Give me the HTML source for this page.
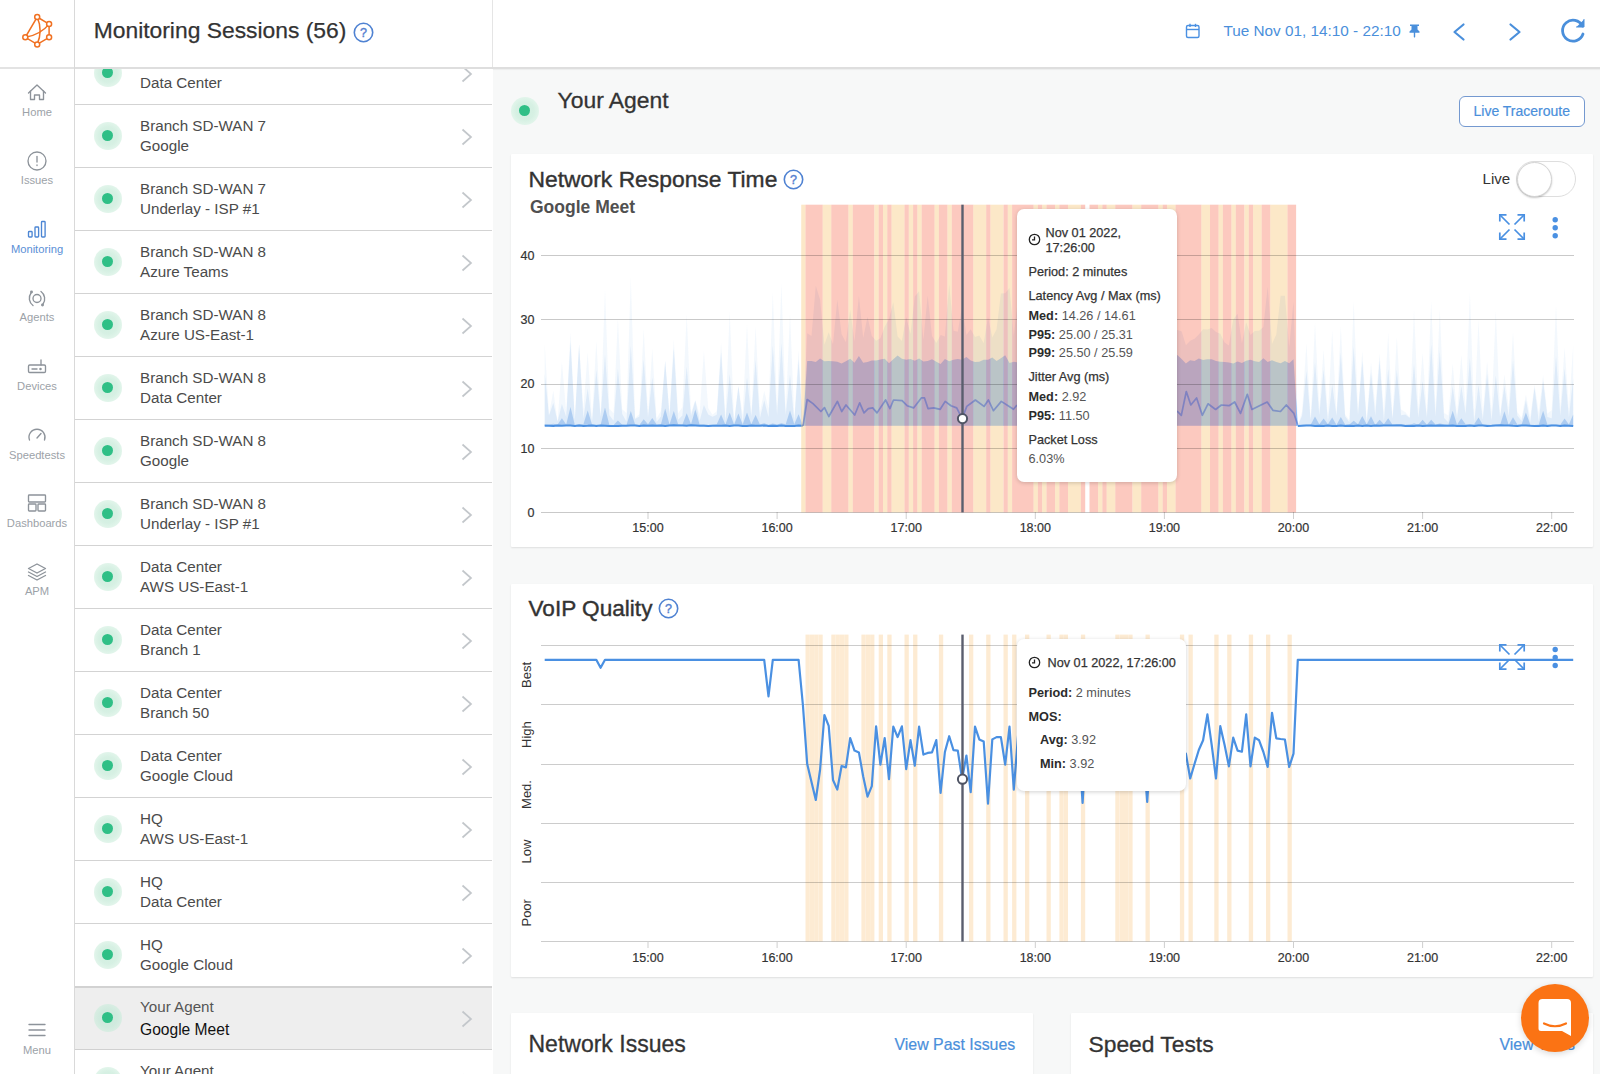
<!DOCTYPE html>
<html><head><meta charset="utf-8"><title>Monitoring</title>
<style>
*{box-sizing:border-box;margin:0;padding:0}
html,body{width:1600px;height:1074px;overflow:hidden;background:#f7f8f8;font-family:"Liberation Sans", sans-serif;color:#3d3d3d}
.abs{position:absolute}
.t{position:absolute;white-space:nowrap;line-height:1}
.nav{position:absolute;left:0;top:0;width:75px;height:1074px;background:#fff;border-right:1px solid #d9d9d9}
.navlbl{position:absolute;left:0;width:74px;text-align:center;font-size:11.2px;color:#9aa0a6;white-space:nowrap;line-height:1}
.panel{position:absolute;left:75px;top:0;width:418px;height:1074px;background:#fff;overflow:hidden}
.row{position:absolute;left:0;width:417px;height:63px;border-bottom:1px solid #dcdcdc;background:#fff}
.row .l1,.row .l2{position:absolute;left:65px;font-size:15.2px;color:#474747;white-space:nowrap;line-height:1}
.row .l1{top:14px}
.row .l2{top:34px}
.dot{position:absolute;width:28px;height:28px;border-radius:50%;background:radial-gradient(circle, #d2efe1 0, #d6f0e3 9px, #e2f5eb 14px)}
.dot:after{content:"";position:absolute;left:8.5px;top:8.5px;width:11px;height:11px;border-radius:50%;background:#2fbf86}
.card{position:absolute;background:#fff;border-radius:1px;box-shadow:0 1px 2px rgba(0,0,0,0.10)}
.tip{position:absolute;background:#fff;border-radius:7px;box-shadow:0 1px 4px rgba(0,0,0,0.18);font-size:12.7px;color:#333}
.t b{font-weight:700;color:#2b2b2b}
</style></head><body>
<div class="nav"><svg class="abs" style="left:0;top:0" width="74" height="68" viewBox="0 0 74 68">
<g fill="none" stroke="#f07122" stroke-width="1.5" stroke-linecap="round">
<path d="M37.2 17 L49.1 24.1 L49.1 37.3 L37.2 44.4 L25.3 37.3 Z"/>
<path d="M37.2 17 Q43 30.7 37.2 44.4"/>
<path d="M25.3 37.3 Q40.6 34.7 49.1 24.1"/>
</g>
<g fill="#fff" stroke="#f07122" stroke-width="1.5">
<circle cx="37.2" cy="17" r="2.5"/><circle cx="49.1" cy="24.1" r="2.5"/><circle cx="49.1" cy="37.3" r="2.5"/>
<circle cx="37.2" cy="44.4" r="2.5"/><circle cx="25.3" cy="37.3" r="2.5"/>
</g></svg><div class="abs" style="left:0;top:67px;width:74px;height:2px;background:#e3e3e3"></div><svg class="abs" style="left:0;top:0" width="74" height="1074" viewBox="0 0 74 1074" fill="none" stroke-linecap="round" stroke-linejoin="round"><g stroke="#8d939a" stroke-width="1.35"><path d="M28.5 93 L37 85 L45.5 93" /><path d="M30.5 91 V99.5 H34.5 V95 H39.5 V99.5 H43.5 V91"/></g><g stroke="#8d939a" stroke-width="1.35"><circle cx="37" cy="161" r="9"/><path d="M37 156.5 V162"/><path d="M37 165 V165.6"/></g><g stroke="#4c86d4" stroke-width="1.35"><rect x="28.5" y="231.5" width="3.6" height="5.5" rx="0.8"/><rect x="35" y="227" width="3.6" height="10" rx="0.8"/><rect x="41.5" y="221.5" width="3.6" height="15.5" rx="0.8"/></g><g stroke="#8d939a" stroke-width="1.35"><circle cx="37" cy="298.5" r="4"/><path d="M31 293 A9 9 0 0 0 33 305.5"/><path d="M43 304 A9 9 0 0 0 41 291.5"/><circle cx="31.5" cy="292" r="0.8"/><circle cx="42.5" cy="305" r="0.8"/></g><g stroke="#8d939a" stroke-width="1.35"><rect x="28.5" y="365" width="17" height="7.5" rx="1.2"/><path d="M41 365 V360"/><path d="M32 369 H37"/><circle cx="40.5" cy="369" r="0.6"/></g><g stroke="#8d939a" stroke-width="1.35"><path d="M29.5 440 A8 8 0 1 1 44.5 440"/><path d="M37 438 L41 433.5"/></g><g stroke="#8d939a" stroke-width="1.35"><rect x="28.5" y="495" width="17" height="7" rx="0.8"/><rect x="28.5" y="504" width="7.5" height="7" rx="0.8"/><rect x="38" y="504" width="7.5" height="7" rx="0.8"/></g><g stroke="#8d939a" stroke-width="1.35"><path d="M37 564 L45.5 568.5 L37 573 L28.5 568.5 Z"/><path d="M28.5 572 L37 576.5 L45.5 572"/><path d="M28.5 575.5 L37 580 L45.5 575.5"/></g><g stroke="#8d939a" stroke-width="1.35"><path d="M29 1024.5 H45"/><path d="M29 1030 H45"/><path d="M29 1035.5 H45"/></g></svg><div class="navlbl" style="top:107px;color:#9ca2a8">Home</div><div class="navlbl" style="top:175px;color:#9ca2a8">Issues</div><div class="navlbl" style="top:244px;color:#5a8fd6">Monitoring</div><div class="navlbl" style="top:312px;color:#9ca2a8">Agents</div><div class="navlbl" style="top:381px;color:#9ca2a8">Devices</div><div class="navlbl" style="top:450px;color:#9ca2a8">Speedtests</div><div class="navlbl" style="top:518px;color:#9ca2a8">Dashboards</div><div class="navlbl" style="top:586px;color:#9ca2a8">APM</div><div class="navlbl" style="top:1045px;color:#9ca2a8">Menu</div></div><div class="panel"><div class="dot" style="left:18.5px;top:58.5px"></div><div class="t" style="left:65px;top:55px;font-size:15.2px;color:#4b4b4b">Data Center</div><div class="t" style="left:65px;top:75px;font-size:15.2px;color:#4b4b4b">Data Center</div><svg class="abs" style="left:386px;top:65px" width="12" height="18" viewBox="0 0 12 18"><path d="M1.5 1.5 L10 9 L1.5 16.5" fill="none" stroke="#c3c7cb" stroke-width="1.7"/></svg><div class="abs" style="left:0;top:103.5px;width:417px;height:1px;background:#d3d3d3"></div><div class="dot" style="left:18.5px;top:121.5px"></div><div class="t" style="left:65px;top:118px;font-size:15.2px;color:#4b4b4b">Branch SD-WAN 7</div><div class="t" style="left:65px;top:138px;font-size:15.2px;color:#4b4b4b">Google</div><svg class="abs" style="left:386px;top:128px" width="12" height="18" viewBox="0 0 12 18"><path d="M1.5 1.5 L10 9 L1.5 16.5" fill="none" stroke="#c3c7cb" stroke-width="1.7"/></svg><div class="abs" style="left:0;top:166.5px;width:417px;height:1px;background:#d3d3d3"></div><div class="dot" style="left:18.5px;top:184.5px"></div><div class="t" style="left:65px;top:181px;font-size:15.2px;color:#4b4b4b">Branch SD-WAN 7</div><div class="t" style="left:65px;top:201px;font-size:15.2px;color:#4b4b4b">Underlay - ISP #1</div><svg class="abs" style="left:386px;top:191px" width="12" height="18" viewBox="0 0 12 18"><path d="M1.5 1.5 L10 9 L1.5 16.5" fill="none" stroke="#c3c7cb" stroke-width="1.7"/></svg><div class="abs" style="left:0;top:229.5px;width:417px;height:1px;background:#d3d3d3"></div><div class="dot" style="left:18.5px;top:247.5px"></div><div class="t" style="left:65px;top:244px;font-size:15.2px;color:#4b4b4b">Branch SD-WAN 8</div><div class="t" style="left:65px;top:264px;font-size:15.2px;color:#4b4b4b">Azure Teams</div><svg class="abs" style="left:386px;top:254px" width="12" height="18" viewBox="0 0 12 18"><path d="M1.5 1.5 L10 9 L1.5 16.5" fill="none" stroke="#c3c7cb" stroke-width="1.7"/></svg><div class="abs" style="left:0;top:292.5px;width:417px;height:1px;background:#d3d3d3"></div><div class="dot" style="left:18.5px;top:310.5px"></div><div class="t" style="left:65px;top:307px;font-size:15.2px;color:#4b4b4b">Branch SD-WAN 8</div><div class="t" style="left:65px;top:327px;font-size:15.2px;color:#4b4b4b">Azure US-East-1</div><svg class="abs" style="left:386px;top:317px" width="12" height="18" viewBox="0 0 12 18"><path d="M1.5 1.5 L10 9 L1.5 16.5" fill="none" stroke="#c3c7cb" stroke-width="1.7"/></svg><div class="abs" style="left:0;top:355.5px;width:417px;height:1px;background:#d3d3d3"></div><div class="dot" style="left:18.5px;top:373.5px"></div><div class="t" style="left:65px;top:370px;font-size:15.2px;color:#4b4b4b">Branch SD-WAN 8</div><div class="t" style="left:65px;top:390px;font-size:15.2px;color:#4b4b4b">Data Center</div><svg class="abs" style="left:386px;top:380px" width="12" height="18" viewBox="0 0 12 18"><path d="M1.5 1.5 L10 9 L1.5 16.5" fill="none" stroke="#c3c7cb" stroke-width="1.7"/></svg><div class="abs" style="left:0;top:418.5px;width:417px;height:1px;background:#d3d3d3"></div><div class="dot" style="left:18.5px;top:436.5px"></div><div class="t" style="left:65px;top:433px;font-size:15.2px;color:#4b4b4b">Branch SD-WAN 8</div><div class="t" style="left:65px;top:453px;font-size:15.2px;color:#4b4b4b">Google</div><svg class="abs" style="left:386px;top:443px" width="12" height="18" viewBox="0 0 12 18"><path d="M1.5 1.5 L10 9 L1.5 16.5" fill="none" stroke="#c3c7cb" stroke-width="1.7"/></svg><div class="abs" style="left:0;top:481.5px;width:417px;height:1px;background:#d3d3d3"></div><div class="dot" style="left:18.5px;top:499.5px"></div><div class="t" style="left:65px;top:496px;font-size:15.2px;color:#4b4b4b">Branch SD-WAN 8</div><div class="t" style="left:65px;top:516px;font-size:15.2px;color:#4b4b4b">Underlay - ISP #1</div><svg class="abs" style="left:386px;top:506px" width="12" height="18" viewBox="0 0 12 18"><path d="M1.5 1.5 L10 9 L1.5 16.5" fill="none" stroke="#c3c7cb" stroke-width="1.7"/></svg><div class="abs" style="left:0;top:544.5px;width:417px;height:1px;background:#d3d3d3"></div><div class="dot" style="left:18.5px;top:562.5px"></div><div class="t" style="left:65px;top:559px;font-size:15.2px;color:#4b4b4b">Data Center</div><div class="t" style="left:65px;top:579px;font-size:15.2px;color:#4b4b4b">AWS US-East-1</div><svg class="abs" style="left:386px;top:569px" width="12" height="18" viewBox="0 0 12 18"><path d="M1.5 1.5 L10 9 L1.5 16.5" fill="none" stroke="#c3c7cb" stroke-width="1.7"/></svg><div class="abs" style="left:0;top:607.5px;width:417px;height:1px;background:#d3d3d3"></div><div class="dot" style="left:18.5px;top:625.5px"></div><div class="t" style="left:65px;top:622px;font-size:15.2px;color:#4b4b4b">Data Center</div><div class="t" style="left:65px;top:642px;font-size:15.2px;color:#4b4b4b">Branch 1</div><svg class="abs" style="left:386px;top:632px" width="12" height="18" viewBox="0 0 12 18"><path d="M1.5 1.5 L10 9 L1.5 16.5" fill="none" stroke="#c3c7cb" stroke-width="1.7"/></svg><div class="abs" style="left:0;top:670.5px;width:417px;height:1px;background:#d3d3d3"></div><div class="dot" style="left:18.5px;top:688.5px"></div><div class="t" style="left:65px;top:685px;font-size:15.2px;color:#4b4b4b">Data Center</div><div class="t" style="left:65px;top:705px;font-size:15.2px;color:#4b4b4b">Branch 50</div><svg class="abs" style="left:386px;top:695px" width="12" height="18" viewBox="0 0 12 18"><path d="M1.5 1.5 L10 9 L1.5 16.5" fill="none" stroke="#c3c7cb" stroke-width="1.7"/></svg><div class="abs" style="left:0;top:733.5px;width:417px;height:1px;background:#d3d3d3"></div><div class="dot" style="left:18.5px;top:751.5px"></div><div class="t" style="left:65px;top:748px;font-size:15.2px;color:#4b4b4b">Data Center</div><div class="t" style="left:65px;top:768px;font-size:15.2px;color:#4b4b4b">Google Cloud</div><svg class="abs" style="left:386px;top:758px" width="12" height="18" viewBox="0 0 12 18"><path d="M1.5 1.5 L10 9 L1.5 16.5" fill="none" stroke="#c3c7cb" stroke-width="1.7"/></svg><div class="abs" style="left:0;top:796.5px;width:417px;height:1px;background:#d3d3d3"></div><div class="dot" style="left:18.5px;top:814.5px"></div><div class="t" style="left:65px;top:811px;font-size:15.2px;color:#4b4b4b">HQ</div><div class="t" style="left:65px;top:831px;font-size:15.2px;color:#4b4b4b">AWS US-East-1</div><svg class="abs" style="left:386px;top:821px" width="12" height="18" viewBox="0 0 12 18"><path d="M1.5 1.5 L10 9 L1.5 16.5" fill="none" stroke="#c3c7cb" stroke-width="1.7"/></svg><div class="abs" style="left:0;top:859.5px;width:417px;height:1px;background:#d3d3d3"></div><div class="dot" style="left:18.5px;top:877.5px"></div><div class="t" style="left:65px;top:874px;font-size:15.2px;color:#4b4b4b">HQ</div><div class="t" style="left:65px;top:894px;font-size:15.2px;color:#4b4b4b">Data Center</div><svg class="abs" style="left:386px;top:884px" width="12" height="18" viewBox="0 0 12 18"><path d="M1.5 1.5 L10 9 L1.5 16.5" fill="none" stroke="#c3c7cb" stroke-width="1.7"/></svg><div class="abs" style="left:0;top:922.5px;width:417px;height:1px;background:#d3d3d3"></div><div class="dot" style="left:18.5px;top:940.5px"></div><div class="t" style="left:65px;top:937px;font-size:15.2px;color:#4b4b4b">HQ</div><div class="t" style="left:65px;top:957px;font-size:15.2px;color:#4b4b4b">Google Cloud</div><svg class="abs" style="left:386px;top:947px" width="12" height="18" viewBox="0 0 12 18"><path d="M1.5 1.5 L10 9 L1.5 16.5" fill="none" stroke="#c3c7cb" stroke-width="1.7"/></svg><div class="abs" style="left:0;top:985.5px;width:417px;height:1px;background:#d3d3d3"></div><div class="abs" style="left:0;top:986px;width:417px;height:64px;background:#eeeeee"></div><div class="abs" style="left:0;top:985.5px;width:417px;height:2px;background:#d2d2d2"></div><div class="dot" style="left:18.5px;top:1003.5px;background:radial-gradient(circle, #cde9dc 0, #d0eade 9px, #d9ede3 14px)"></div><div class="t" style="left:65px;top:998.5px;font-size:15.2px;color:#555">Your Agent</div><div class="t" style="left:65px;top:1021.5px;font-size:15.6px;color:#111">Google Meet</div><svg class="abs" style="left:386px;top:1010px" width="12" height="18" viewBox="0 0 12 18"><path d="M1.5 1.5 L10 9 L1.5 16.5" fill="none" stroke="#c3c7cb" stroke-width="1.7"/></svg><div class="abs" style="left:0;top:1049px;width:417px;height:1px;background:#d0d0d0"></div><div class="dot" style="left:18.5px;top:1066.5px"></div><div class="t" style="left:65px;top:1063px;font-size:15.2px;color:#4b4b4b">Your Agent</div><div class="t" style="left:65px;top:1083px;font-size:15.2px;color:#4b4b4b">Google Cloud</div><svg class="abs" style="left:386px;top:1073px" width="12" height="18" viewBox="0 0 12 18"><path d="M1.5 1.5 L10 9 L1.5 16.5" fill="none" stroke="#c3c7cb" stroke-width="1.7"/></svg><div class="abs" style="left:0;top:1111.5px;width:417px;height:1px;background:#d3d3d3"></div><div class="abs" style="left:0;top:0;width:418px;height:69px;background:#fff;border-bottom:2px solid #dedede"></div><div class="abs" style="left:417px;top:0;width:1px;height:67px;background:#e6e6e6"></div><div class="t" style="left:18.7px;top:19px;font-size:22.85px;color:#333;-webkit-text-stroke:0.25px #333">Monitoring Sessions (56)</div><svg class="abs" style="left:278px;top:22px" width="21" height="21" viewBox="0 0 21 21"><circle cx="10.5" cy="10.5" r="9.2" fill="none" stroke="#4f82d2" stroke-width="1.6"/><text x="10.5" y="15" text-anchor="middle" font-family="Liberation Sans" font-size="12.5" fill="#5580d0" stroke="#5580d0" stroke-width="0.4">?</text></svg></div><div class="abs" style="left:493px;top:0;width:1107px;height:69px;background:#fff;border-bottom:2px solid #dedede;box-shadow:0 1px 1px rgba(0,0,0,0.04)"></div><svg class="abs" style="left:1184px;top:22px" width="18" height="18" viewBox="0 0 18 18" fill="none" stroke="#4a90e2" stroke-width="1.4"><rect x="2.5" y="3.5" width="12.5" height="12" rx="1.5"/><path d="M2.5 7.5 H15"/><path d="M6 1.8 V5"/><path d="M11.5 1.8 V5"/></svg><div class="t" style="left:1223.5px;top:22.5px;font-size:15.3px;color:#4a8fdb">Tue Nov 01, 14:10 - 22:10</div><svg class="abs" style="left:1407px;top:23px" width="15" height="15" viewBox="0 0 15 15" fill="#4a8fdb"><path d="M3 1.5 H12 V3 H10.5 V6.5 L12.5 8.5 V9.8 H8.2 V14 L7.5 14.8 L6.8 14 V9.8 H2.5 V8.5 L4.5 6.5 V3 H3 Z"/></svg><svg class="abs" style="left:1448px;top:20px" width="22" height="24" viewBox="0 0 22 24" fill="none" stroke="#4a8fdb" stroke-width="2.2" stroke-linecap="round" stroke-linejoin="round"><path d="M15.5 4.5 L6.5 12 L15.5 19.5"/></svg><svg class="abs" style="left:1504px;top:20px" width="22" height="24" viewBox="0 0 22 24" fill="none" stroke="#4a8fdb" stroke-width="2.2" stroke-linecap="round" stroke-linejoin="round"><path d="M6.5 4.5 L15.5 12 L6.5 19.5"/></svg><svg class="abs" style="left:1557px;top:13.5px" width="32" height="32" viewBox="0 0 32 32" fill="none" stroke="#4a8fdb" stroke-width="2.8" stroke-linecap="round"><path d="M25.5 12 A10.5 10.5 0 1 0 26 20"/><path d="M27 5.5 V13 H19.5" fill="#4a8fdb" stroke-width="1"/></svg><div class="dot" style="left:510.5px;top:96.5px"></div><div class="t" style="left:557.5px;top:89.2px;font-size:22.9px;color:#333;-webkit-text-stroke:0.3px #333">Your Agent</div><div class="abs" style="left:1459px;top:96px;width:126px;height:31px;border:1.3px solid #7499d0;border-radius:6px;background:#fff"></div><div class="t" style="left:1473.5px;top:104px;font-size:14px;color:#4a8fdb;-webkit-text-stroke:0.2px #4a8fdb">Live Traceroute</div><div class="card" style="left:511px;top:154px;width:1082px;height:393px"></div><div class="card" style="left:511px;top:584px;width:1082px;height:393px"></div><div class="card" style="left:511px;top:1013px;width:522px;height:100px"></div><div class="card" style="left:1071px;top:1013px;width:522px;height:100px"></div><div class="t" style="left:528.5px;top:168px;font-size:22.85px;color:#333;-webkit-text-stroke:0.4px #333">Network Response Time</div><svg class="abs" style="left:783px;top:169px" width="21" height="21" viewBox="0 0 21 21"><circle cx="10.5" cy="10.5" r="9.2" fill="none" stroke="#4f82d2" stroke-width="1.6"/><text x="10.5" y="15" text-anchor="middle" font-family="Liberation Sans" font-size="12.5" fill="#5580d0" stroke="#5580d0" stroke-width="0.4">?</text></svg><div class="t" style="left:530px;top:199px;font-size:17.5px;font-weight:700;color:#505050">Google Meet</div><div class="t" style="left:1482.5px;top:171px;font-size:15.1px;color:#333">Live</div><div class="abs" style="left:1516px;top:161px;width:60px;height:36px;border-radius:18px;border:1px solid #dedede;background:#fff"></div><div class="abs" style="left:1517px;top:162px;width:35px;height:35px;border-radius:50%;background:#fff;border:1px solid #d4d4d4;box-shadow:0 1px 2px rgba(0,0,0,0.22)"></div><div class="t" style="left:528.5px;top:598px;font-size:22.6px;color:#333;-webkit-text-stroke:0.4px #333">VoIP Quality</div><svg class="abs" style="left:658px;top:598px" width="21" height="21" viewBox="0 0 21 21"><circle cx="10.5" cy="10.5" r="9.2" fill="none" stroke="#4f82d2" stroke-width="1.6"/><text x="10.5" y="15" text-anchor="middle" font-family="Liberation Sans" font-size="12.5" fill="#5580d0" stroke="#5580d0" stroke-width="0.4">?</text></svg><div class="t" style="left:528.5px;top:1033px;font-size:23px;color:#333;-webkit-text-stroke:0.3px #333">Network Issues</div><div class="t" style="left:894.5px;top:1037px;font-size:15.9px;color:#4a8fdb;-webkit-text-stroke:0.2px #4a8fdb">View Past Issues</div><div class="t" style="left:1088.5px;top:1033px;font-size:22.8px;color:#333;-webkit-text-stroke:0.3px #333">Speed Tests</div><div class="t" style="left:1499.5px;top:1037px;font-size:15.9px;color:#4a8fdb;-webkit-text-stroke:0.2px #4a8fdb">View Tests</div><div class="abs" style="left:1521px;top:984px;width:68px;height:68px;border-radius:50%;background:#fb7314;box-shadow:0 2px 6px rgba(0,0,0,0.15)"></div><svg class="abs" style="left:1521px;top:984px" width="68" height="68" viewBox="0 0 68 68"><path d="M17.5 19 Q17.5 15 21.5 15 H46 Q50 15 50 19 V52 L41 47 H20 Q17.5 47 17.5 44.5 Z" fill="#fff"/><path d="M23 39.5 Q34 45 45 39.5" fill="none" stroke="#fb7314" stroke-width="2.2" stroke-linecap="round"/></svg><svg class="abs" style="left:0;top:0" width="1600" height="1074" viewBox="0 0 1600 1074"><text x="534.5" y="516.7" text-anchor="end" font-family="Liberation Sans" font-size="12.5" fill="#333" stroke="#333" stroke-width="0.2">0</text><text x="534.5" y="452.5" text-anchor="end" font-family="Liberation Sans" font-size="12.5" fill="#333" stroke="#333" stroke-width="0.2">10</text><text x="534.5" y="388.3" text-anchor="end" font-family="Liberation Sans" font-size="12.5" fill="#333" stroke="#333" stroke-width="0.2">20</text><text x="534.5" y="324.1" text-anchor="end" font-family="Liberation Sans" font-size="12.5" fill="#333" stroke="#333" stroke-width="0.2">30</text><text x="534.5" y="259.9" text-anchor="end" font-family="Liberation Sans" font-size="12.5" fill="#333" stroke="#333" stroke-width="0.2">40</text><rect x="647.5" y="512" width="1" height="7" fill="#cfcfcf"/><text x="648.0" y="532" text-anchor="middle" font-family="Liberation Sans" font-size="12.5" fill="#333" stroke="#333" stroke-width="0.2">15:00</text><rect x="776.6" y="512" width="1" height="7" fill="#cfcfcf"/><text x="777.1" y="532" text-anchor="middle" font-family="Liberation Sans" font-size="12.5" fill="#333" stroke="#333" stroke-width="0.2">16:00</text><rect x="905.7" y="512" width="1" height="7" fill="#cfcfcf"/><text x="906.2" y="532" text-anchor="middle" font-family="Liberation Sans" font-size="12.5" fill="#333" stroke="#333" stroke-width="0.2">17:00</text><rect x="1034.8" y="512" width="1" height="7" fill="#cfcfcf"/><text x="1035.3" y="532" text-anchor="middle" font-family="Liberation Sans" font-size="12.5" fill="#333" stroke="#333" stroke-width="0.2">18:00</text><rect x="1163.9" y="512" width="1" height="7" fill="#cfcfcf"/><text x="1164.4" y="532" text-anchor="middle" font-family="Liberation Sans" font-size="12.5" fill="#333" stroke="#333" stroke-width="0.2">19:00</text><rect x="1293.0" y="512" width="1" height="7" fill="#cfcfcf"/><text x="1293.5" y="532" text-anchor="middle" font-family="Liberation Sans" font-size="12.5" fill="#333" stroke="#333" stroke-width="0.2">20:00</text><rect x="1422.1" y="512" width="1" height="7" fill="#cfcfcf"/><text x="1422.6" y="532" text-anchor="middle" font-family="Liberation Sans" font-size="12.5" fill="#333" stroke="#333" stroke-width="0.2">21:00</text><rect x="1551.2" y="512" width="1" height="7" fill="#cfcfcf"/><text x="1551.7" y="532" text-anchor="middle" font-family="Liberation Sans" font-size="12.5" fill="#333" stroke="#333" stroke-width="0.2">22:00</text><path d="M544.7 344.5 L549.0 414.6 L553.3 390.8 L557.6 421.5 L561.9 362.0 L566.2 412.2 L570.5 332.8 L574.8 419.7 L579.1 344.3 L583.4 409.2 L587.7 352.2 L592.0 419.7 L596.3 340.9 L600.6 415.8 L605.0 289.5 L609.3 408.8 L613.6 413.2 L617.9 318.3 L622.2 409.3 L626.5 412.9 L630.8 277.4 L635.1 418.1 L639.4 413.9 L643.7 328.6 L648.0 414.5 L652.3 348.9 L656.6 418.4 L660.9 410.9 L665.2 360.6 L669.5 413.1 L673.8 339.0 L678.1 413.2 L682.4 407.2 L686.7 314.6 L691.0 412.4 L695.3 400.1 L699.6 414.2 L703.9 351.0 L708.2 408.1 L712.5 414.8 L716.8 411.0 L721.1 343.0 L725.4 417.2 L729.7 311.8 L734.1 422.1 L738.4 385.7 L742.7 414.9 L747.0 324.3 L751.3 414.7 L755.6 326.7 L759.9 412.2 L764.2 391.0 L768.5 408.4 L772.8 292.5 L777.1 409.1 L781.4 283.2 L785.7 411.6 L790.0 313.7 L794.3 418.3 L798.6 350.5 L802.9 425.7 L802.9 425.7 L798.6 425.5 L794.3 426.1 L790.0 426.1 L785.7 425.9 L781.4 425.6 L777.1 426.0 L772.8 425.8 L768.5 426.0 L764.2 425.5 L759.9 425.8 L755.6 425.7 L751.3 425.5 L747.0 425.9 L742.7 426.0 L738.4 425.4 L734.1 425.4 L729.7 425.9 L725.4 425.4 L721.1 425.7 L716.8 425.8 L712.5 425.8 L708.2 426.0 L703.9 425.7 L699.6 425.7 L695.3 425.5 L691.0 425.3 L686.7 425.7 L682.4 425.4 L678.1 425.5 L673.8 425.3 L669.5 425.6 L665.2 426.0 L660.9 425.4 L656.6 425.8 L652.3 425.4 L648.0 425.7 L643.7 425.5 L639.4 426.1 L635.1 425.4 L630.8 425.5 L626.5 425.7 L622.2 425.8 L617.9 425.9 L613.6 426.0 L609.3 426.0 L605.0 425.8 L600.6 425.6 L596.3 426.0 L592.0 425.4 L587.7 425.8 L583.4 426.0 L579.1 425.5 L574.8 425.9 L570.5 425.6 L566.2 425.5 L561.9 425.7 L557.6 425.6 L553.3 425.9 L549.0 425.7 L544.7 425.8 Z" fill="rgba(74,144,226,0.065)"/><path d="M544.7 373.2 L549.0 415.5 L553.3 403.1 L557.6 421.6 L561.9 403.9 L566.2 417.0 L570.5 341.9 L574.8 420.4 L579.1 344.3 L583.4 418.6 L587.7 388.5 L592.0 422.0 L596.3 369.9 L600.6 417.0 L605.0 354.2 L609.3 414.9 L613.6 420.7 L617.9 368.4 L622.2 413.9 L626.5 421.7 L630.8 345.5 L635.1 419.1 L639.4 416.4 L643.7 359.6 L648.0 417.2 L652.3 377.2 L656.6 421.9 L660.9 416.5 L665.2 360.8 L669.5 416.1 L673.8 348.0 L678.1 419.8 L682.4 415.5 L686.7 366.7 L691.0 416.1 L695.3 400.4 L699.6 420.9 L703.9 405.1 L708.2 414.4 L712.5 416.7 L716.8 414.7 L721.1 352.1 L725.4 421.5 L729.7 374.1 L734.1 422.4 L738.4 386.0 L742.7 422.9 L747.0 377.2 L751.3 416.6 L755.6 360.0 L759.9 418.2 L764.2 400.2 L768.5 417.1 L772.8 345.2 L777.1 415.3 L781.4 343.1 L785.7 414.9 L790.0 374.5 L794.3 421.5 L798.6 359.4 L802.9 425.7 L802.9 425.7 L798.6 425.5 L794.3 426.1 L790.0 426.1 L785.7 425.9 L781.4 425.6 L777.1 426.0 L772.8 425.8 L768.5 426.0 L764.2 425.5 L759.9 425.8 L755.6 425.7 L751.3 425.5 L747.0 425.9 L742.7 426.0 L738.4 425.4 L734.1 425.4 L729.7 425.9 L725.4 425.4 L721.1 425.7 L716.8 425.8 L712.5 425.8 L708.2 426.0 L703.9 425.7 L699.6 425.7 L695.3 425.5 L691.0 425.3 L686.7 425.7 L682.4 425.4 L678.1 425.5 L673.8 425.3 L669.5 425.6 L665.2 426.0 L660.9 425.4 L656.6 425.8 L652.3 425.4 L648.0 425.7 L643.7 425.5 L639.4 426.1 L635.1 425.4 L630.8 425.5 L626.5 425.7 L622.2 425.8 L617.9 425.9 L613.6 426.0 L609.3 426.0 L605.0 425.8 L600.6 425.6 L596.3 426.0 L592.0 425.4 L587.7 425.8 L583.4 426.0 L579.1 425.5 L574.8 425.9 L570.5 425.6 L566.2 425.5 L561.9 425.7 L557.6 425.6 L553.3 425.9 L549.0 425.7 L544.7 425.8 Z" fill="rgba(74,144,226,0.12)"/><path d="M544.7 424.2 L549.0 424.5 L553.3 423.8 L557.6 424.5 L561.9 418.3 L566.2 424.6 L570.5 407.1 L574.8 424.9 L579.1 424.3 L583.4 424.2 L587.7 410.4 L592.0 424.4 L596.3 424.7 L600.6 425.0 L605.0 407.5 L609.3 424.7 L613.6 424.9 L617.9 420.5 L622.2 424.7 L626.5 424.9 L630.8 411.0 L635.1 424.5 L639.4 424.9 L643.7 419.3 L648.0 424.3 L652.3 417.9 L656.6 424.5 L660.9 424.5 L665.2 408.4 L669.5 424.6 L673.8 411.0 L678.1 424.2 L682.4 424.7 L686.7 413.3 L691.0 424.2 L695.3 409.5 L699.6 424.6 L703.9 424.6 L708.2 424.9 L712.5 424.8 L716.8 424.2 L721.1 414.5 L725.4 424.8 L729.7 412.6 L734.1 424.7 L738.4 413.5 L742.7 424.6 L747.0 412.6 L751.3 424.2 L755.6 414.9 L759.9 424.4 L764.2 423.3 L768.5 424.7 L772.8 423.6 L777.1 424.4 L781.4 423.2 L785.7 424.2 L790.0 410.5 L794.3 424.3 L798.6 414.3 L802.9 425.7 L802.9 425.7 L798.6 425.5 L794.3 426.1 L790.0 426.1 L785.7 425.9 L781.4 425.6 L777.1 426.0 L772.8 425.8 L768.5 426.0 L764.2 425.5 L759.9 425.8 L755.6 425.7 L751.3 425.5 L747.0 425.9 L742.7 426.0 L738.4 425.4 L734.1 425.4 L729.7 425.9 L725.4 425.4 L721.1 425.7 L716.8 425.8 L712.5 425.8 L708.2 426.0 L703.9 425.7 L699.6 425.7 L695.3 425.5 L691.0 425.3 L686.7 425.7 L682.4 425.4 L678.1 425.5 L673.8 425.3 L669.5 425.6 L665.2 426.0 L660.9 425.4 L656.6 425.8 L652.3 425.4 L648.0 425.7 L643.7 425.5 L639.4 426.1 L635.1 425.4 L630.8 425.5 L626.5 425.7 L622.2 425.8 L617.9 425.9 L613.6 426.0 L609.3 426.0 L605.0 425.8 L600.6 425.6 L596.3 426.0 L592.0 425.4 L587.7 425.8 L583.4 426.0 L579.1 425.5 L574.8 425.9 L570.5 425.6 L566.2 425.5 L561.9 425.7 L557.6 425.6 L553.3 425.9 L549.0 425.7 L544.7 425.8 Z" fill="rgba(74,144,226,0.33)"/><path d="M1297.8 426.0 L1302.1 411.5 L1306.4 343.6 L1310.7 419.4 L1315.0 322.2 L1319.3 408.9 L1323.6 349.8 L1327.9 415.2 L1332.2 330.7 L1336.5 412.9 L1340.8 326.2 L1345.1 414.6 L1349.4 420.1 L1353.7 301.2 L1358.0 411.5 L1362.3 350.8 L1366.7 419.8 L1371.0 362.5 L1375.3 407.1 L1379.6 353.4 L1383.9 412.2 L1388.2 332.7 L1392.5 417.5 L1396.8 337.0 L1401.1 409.5 L1405.4 412.2 L1409.7 417.2 L1414.0 309.8 L1418.3 409.7 L1422.6 352.8 L1426.9 414.5 L1431.2 300.8 L1435.5 409.2 L1439.8 309.4 L1444.1 413.0 L1448.4 415.6 L1452.7 363.4 L1457.0 414.5 L1461.3 354.8 L1465.6 407.4 L1469.9 292.2 L1474.2 416.8 L1478.5 319.7 L1482.8 414.1 L1487.1 361.3 L1491.5 411.4 L1495.8 311.1 L1500.1 415.2 L1504.4 374.6 L1508.7 407.4 L1513.0 331.7 L1517.3 412.0 L1521.6 418.1 L1525.9 394.4 L1530.2 417.0 L1534.5 384.4 L1538.8 412.7 L1543.1 374.7 L1547.4 413.5 L1551.7 410.2 L1556.0 305.3 L1560.3 408.1 L1564.6 347.5 L1568.9 409.2 L1573.2 345.2 L1573.2 426.0 L1568.9 425.7 L1564.6 425.5 L1560.3 425.9 L1556.0 425.6 L1551.7 425.6 L1547.4 426.0 L1543.1 425.4 L1538.8 425.9 L1534.5 425.9 L1530.2 425.7 L1525.9 425.4 L1521.6 425.6 L1517.3 425.9 L1513.0 425.8 L1508.7 425.6 L1504.4 425.4 L1500.1 425.3 L1495.8 425.4 L1491.5 425.8 L1487.1 426.1 L1482.8 425.5 L1478.5 425.4 L1474.2 426.0 L1469.9 425.4 L1465.6 426.1 L1461.3 426.1 L1457.0 426.0 L1452.7 425.4 L1448.4 425.8 L1444.1 425.7 L1439.8 425.5 L1435.5 425.8 L1431.2 425.6 L1426.9 425.7 L1422.6 426.1 L1418.3 425.5 L1414.0 426.1 L1409.7 425.7 L1405.4 426.0 L1401.1 425.4 L1396.8 425.4 L1392.5 425.4 L1388.2 425.6 L1383.9 425.6 L1379.6 425.7 L1375.3 425.6 L1371.0 425.9 L1366.7 425.6 L1362.3 425.9 L1358.0 425.6 L1353.7 426.0 L1349.4 425.8 L1345.1 426.0 L1340.8 425.4 L1336.5 425.9 L1332.2 425.9 L1327.9 425.4 L1323.6 426.1 L1319.3 425.8 L1315.0 425.9 L1310.7 425.5 L1306.4 425.4 L1302.1 425.7 L1297.8 426.0 Z" fill="rgba(74,144,226,0.065)"/><path d="M1297.8 426.0 L1302.1 415.6 L1306.4 370.9 L1310.7 420.2 L1315.0 361.7 L1319.3 415.2 L1323.6 369.6 L1327.9 421.2 L1332.2 384.2 L1336.5 416.1 L1340.8 352.7 L1345.1 416.3 L1349.4 422.3 L1353.7 346.7 L1358.0 415.3 L1362.3 360.9 L1366.7 423.0 L1371.0 373.1 L1375.3 415.8 L1379.6 360.0 L1383.9 421.3 L1388.2 368.8 L1392.5 418.7 L1396.8 369.8 L1401.1 415.3 L1405.4 414.5 L1409.7 417.9 L1414.0 363.6 L1418.3 417.5 L1422.6 381.0 L1426.9 417.7 L1431.2 344.2 L1435.5 416.5 L1439.8 350.9 L1444.1 418.1 L1448.4 422.6 L1452.7 386.3 L1457.0 418.3 L1461.3 386.2 L1465.6 413.9 L1469.9 357.9 L1474.2 422.0 L1478.5 385.0 L1482.8 419.7 L1487.1 373.8 L1491.5 420.3 L1495.8 375.5 L1500.1 417.1 L1504.4 385.7 L1508.7 416.5 L1513.0 360.2 L1517.3 415.5 L1521.6 421.0 L1525.9 400.1 L1530.2 422.7 L1534.5 387.5 L1538.8 421.4 L1543.1 381.1 L1547.4 417.0 L1551.7 418.3 L1556.0 355.8 L1560.3 415.7 L1564.6 368.6 L1568.9 417.6 L1573.2 377.9 L1573.2 426.0 L1568.9 425.7 L1564.6 425.5 L1560.3 425.9 L1556.0 425.6 L1551.7 425.6 L1547.4 426.0 L1543.1 425.4 L1538.8 425.9 L1534.5 425.9 L1530.2 425.7 L1525.9 425.4 L1521.6 425.6 L1517.3 425.9 L1513.0 425.8 L1508.7 425.6 L1504.4 425.4 L1500.1 425.3 L1495.8 425.4 L1491.5 425.8 L1487.1 426.1 L1482.8 425.5 L1478.5 425.4 L1474.2 426.0 L1469.9 425.4 L1465.6 426.1 L1461.3 426.1 L1457.0 426.0 L1452.7 425.4 L1448.4 425.8 L1444.1 425.7 L1439.8 425.5 L1435.5 425.8 L1431.2 425.6 L1426.9 425.7 L1422.6 426.1 L1418.3 425.5 L1414.0 426.1 L1409.7 425.7 L1405.4 426.0 L1401.1 425.4 L1396.8 425.4 L1392.5 425.4 L1388.2 425.6 L1383.9 425.6 L1379.6 425.7 L1375.3 425.6 L1371.0 425.9 L1366.7 425.6 L1362.3 425.9 L1358.0 425.6 L1353.7 426.0 L1349.4 425.8 L1345.1 426.0 L1340.8 425.4 L1336.5 425.9 L1332.2 425.9 L1327.9 425.4 L1323.6 426.1 L1319.3 425.8 L1315.0 425.9 L1310.7 425.5 L1306.4 425.4 L1302.1 425.7 L1297.8 426.0 Z" fill="rgba(74,144,226,0.12)"/><path d="M1297.8 426.0 L1302.1 424.8 L1306.4 424.7 L1310.7 424.8 L1315.0 416.6 L1319.3 424.2 L1323.6 418.4 L1327.9 424.3 L1332.2 417.5 L1336.5 424.9 L1340.8 417.0 L1345.1 424.4 L1349.4 424.5 L1353.7 420.8 L1358.0 424.3 L1362.3 416.0 L1366.7 424.5 L1371.0 416.3 L1375.3 424.9 L1379.6 419.8 L1383.9 424.3 L1388.2 418.3 L1392.5 424.7 L1396.8 424.0 L1401.1 424.1 L1405.4 424.8 L1409.7 424.9 L1414.0 423.3 L1418.3 424.7 L1422.6 419.8 L1426.9 424.8 L1431.2 419.7 L1435.5 424.5 L1439.8 423.5 L1444.1 424.2 L1448.4 424.8 L1452.7 410.8 L1457.0 424.7 L1461.3 418.3 L1465.6 424.2 L1469.9 424.7 L1474.2 424.3 L1478.5 417.5 L1482.8 424.7 L1487.1 424.5 L1491.5 424.9 L1495.8 424.4 L1500.1 424.9 L1504.4 411.2 L1508.7 425.0 L1513.0 417.3 L1517.3 424.4 L1521.6 424.5 L1525.9 412.4 L1530.2 424.6 L1534.5 424.9 L1538.8 424.6 L1543.1 410.8 L1547.4 424.6 L1551.7 424.6 L1556.0 424.8 L1560.3 424.7 L1564.6 418.6 L1568.9 424.4 L1573.2 414.6 L1573.2 426.0 L1568.9 425.7 L1564.6 425.5 L1560.3 425.9 L1556.0 425.6 L1551.7 425.6 L1547.4 426.0 L1543.1 425.4 L1538.8 425.9 L1534.5 425.9 L1530.2 425.7 L1525.9 425.4 L1521.6 425.6 L1517.3 425.9 L1513.0 425.8 L1508.7 425.6 L1504.4 425.4 L1500.1 425.3 L1495.8 425.4 L1491.5 425.8 L1487.1 426.1 L1482.8 425.5 L1478.5 425.4 L1474.2 426.0 L1469.9 425.4 L1465.6 426.1 L1461.3 426.1 L1457.0 426.0 L1452.7 425.4 L1448.4 425.8 L1444.1 425.7 L1439.8 425.5 L1435.5 425.8 L1431.2 425.6 L1426.9 425.7 L1422.6 426.1 L1418.3 425.5 L1414.0 426.1 L1409.7 425.7 L1405.4 426.0 L1401.1 425.4 L1396.8 425.4 L1392.5 425.4 L1388.2 425.6 L1383.9 425.6 L1379.6 425.7 L1375.3 425.6 L1371.0 425.9 L1366.7 425.6 L1362.3 425.9 L1358.0 425.6 L1353.7 426.0 L1349.4 425.8 L1345.1 426.0 L1340.8 425.4 L1336.5 425.9 L1332.2 425.9 L1327.9 425.4 L1323.6 426.1 L1319.3 425.8 L1315.0 425.9 L1310.7 425.5 L1306.4 425.4 L1302.1 425.7 L1297.8 426.0 Z" fill="rgba(74,144,226,0.33)"/><path d="M802.9 425.7 L807.2 333.3 L811.5 336.0 L815.8 285.8 L820.1 299.8 L824.4 344.7 L828.7 332.2 L833.0 344.2 L837.3 299.8 L841.6 334.2 L845.9 342.2 L850.2 309.9 L854.5 341.6 L858.9 295.7 L863.2 338.1 L867.5 316.7 L871.8 335.9 L876.1 340.8 L880.4 338.3 L884.7 326.7 L889.0 319.0 L893.3 302.2 L897.6 336.4 L901.9 340.9 L906.2 317.1 L910.5 334.1 L914.8 296.6 L919.1 291.3 L923.4 340.1 L927.7 295.6 L932.0 335.9 L936.3 343.1 L940.6 335.1 L944.9 336.6 L949.2 284.3 L953.5 330.7 L957.8 331.7 L962.1 306.0 L966.4 335.1 L970.7 329.3 L975.0 337.0 L979.3 335.5 L983.7 343.3 L988.0 317.0 L992.3 337.4 L996.6 329.3 L1000.9 293.4 L1005.2 293.2 L1009.5 288.0 L1013.8 336.0 L1018.1 297.0 L1022.4 319.0 L1026.7 329.3 L1031.0 284.9 L1035.3 296.9 L1039.6 335.1 L1043.9 341.5 L1048.2 344.6 L1052.5 336.6 L1056.8 339.8 L1061.1 329.7 L1065.4 327.8 L1069.7 340.1 L1074.0 334.6 L1078.3 331.2 L1082.6 308.3 L1086.9 315.1 L1091.2 334.0 L1095.5 339.8 L1099.8 336.8 L1104.1 341.0 L1108.4 340.6 L1112.8 333.5 L1117.1 290.2 L1121.4 334.0 L1125.7 310.6 L1130.0 334.9 L1134.3 341.7 L1138.6 342.0 L1142.9 329.7 L1147.2 340.6 L1151.5 304.6 L1155.8 339.6 L1160.1 334.1 L1164.4 340.4 L1168.7 342.6 L1173.0 329.4 L1177.3 330.1 L1181.6 331.2 L1185.9 345.2 L1190.2 340.8 L1194.5 338.7 L1198.8 334.5 L1203.1 329.2 L1207.4 329.6 L1211.7 327.9 L1216.0 332.1 L1220.3 333.7 L1224.6 342.6 L1228.9 345.4 L1233.2 319.7 L1237.6 313.8 L1241.9 343.2 L1246.2 322.2 L1250.5 334.9 L1254.8 331.0 L1259.1 330.7 L1263.4 327.1 L1267.7 286.6 L1272.0 344.1 L1276.3 334.5 L1280.6 295.7 L1284.9 295.7 L1289.2 347.2 L1293.5 301.4 L1297.8 426.0 L1297.8 426.0 L1293.5 425.7 L1289.2 425.7 L1284.9 425.7 L1280.6 425.7 L1276.3 425.7 L1272.0 425.7 L1267.7 425.7 L1263.4 425.7 L1259.1 425.7 L1254.8 425.7 L1250.5 425.7 L1246.2 425.7 L1241.9 425.7 L1237.6 425.7 L1233.2 425.7 L1228.9 425.7 L1224.6 425.7 L1220.3 425.7 L1216.0 425.7 L1211.7 425.7 L1207.4 425.7 L1203.1 425.7 L1198.8 425.7 L1194.5 425.7 L1190.2 425.7 L1185.9 425.7 L1181.6 425.7 L1177.3 425.7 L1173.0 425.7 L1168.7 425.7 L1164.4 425.7 L1160.1 425.7 L1155.8 425.7 L1151.5 425.7 L1147.2 425.7 L1142.9 425.7 L1138.6 425.7 L1134.3 425.7 L1130.0 425.7 L1125.7 425.7 L1121.4 425.7 L1117.1 425.7 L1112.8 425.7 L1108.4 425.7 L1104.1 425.7 L1099.8 425.7 L1095.5 425.7 L1091.2 425.7 L1086.9 425.7 L1082.6 425.7 L1078.3 425.7 L1074.0 425.7 L1069.7 425.7 L1065.4 425.7 L1061.1 425.7 L1056.8 425.7 L1052.5 425.7 L1048.2 425.7 L1043.9 425.7 L1039.6 425.7 L1035.3 425.7 L1031.0 425.7 L1026.7 425.7 L1022.4 425.7 L1018.1 425.7 L1013.8 425.7 L1009.5 425.7 L1005.2 425.7 L1000.9 425.7 L996.6 425.7 L992.3 425.7 L988.0 425.7 L983.7 425.7 L979.3 425.7 L975.0 425.7 L970.7 425.7 L966.4 425.7 L962.1 425.7 L957.8 425.7 L953.5 425.7 L949.2 425.7 L944.9 425.7 L940.6 425.7 L936.3 425.7 L932.0 425.7 L927.7 425.7 L923.4 425.7 L919.1 425.7 L914.8 425.7 L910.5 425.7 L906.2 425.7 L901.9 425.7 L897.6 425.7 L893.3 425.7 L889.0 425.7 L884.7 425.7 L880.4 425.7 L876.1 425.7 L871.8 425.7 L867.5 425.7 L863.2 425.7 L858.9 425.7 L854.5 425.7 L850.2 425.7 L845.9 425.7 L841.6 425.7 L837.3 425.7 L833.0 425.7 L828.7 425.7 L824.4 425.7 L820.1 425.7 L815.8 425.7 L811.5 425.7 L807.2 425.7 L802.9 425.7 Z" fill="rgba(74,144,226,0.15)"/><path d="M802.9 425.7 L807.2 361.1 L811.5 361.1 L815.8 361.9 L820.1 358.5 L824.4 361.2 L828.7 361.1 L833.0 361.3 L837.3 361.7 L841.6 363.4 L845.9 361.3 L850.2 358.8 L854.5 362.8 L858.9 356.0 L863.2 362.7 L867.5 361.9 L871.8 360.5 L876.1 360.6 L880.4 359.4 L884.7 358.8 L889.0 363.3 L893.3 359.3 L897.6 355.6 L901.9 358.8 L906.2 359.7 L910.5 359.0 L914.8 360.8 L919.1 358.4 L923.4 361.4 L927.7 361.1 L932.0 359.2 L936.3 361.8 L940.6 364.0 L944.9 359.1 L949.2 361.2 L953.5 359.8 L957.8 358.9 L962.1 359.7 L966.4 356.9 L970.7 360.5 L975.0 362.1 L979.3 361.8 L983.7 359.7 L988.0 359.8 L992.3 357.4 L996.6 360.9 L1000.9 358.3 L1005.2 355.2 L1009.5 363.1 L1013.8 361.7 L1018.1 362.4 L1022.4 357.9 L1026.7 359.7 L1031.0 363.8 L1035.3 361.6 L1039.6 358.7 L1043.9 359.4 L1048.2 361.5 L1052.5 363.4 L1056.8 362.6 L1061.1 361.0 L1065.4 358.2 L1069.7 360.5 L1074.0 360.8 L1078.3 363.0 L1082.6 354.5 L1086.9 356.0 L1091.2 360.2 L1095.5 361.3 L1099.8 354.8 L1104.1 360.5 L1108.4 362.6 L1112.8 358.4 L1117.1 358.8 L1121.4 359.2 L1125.7 360.1 L1130.0 355.8 L1134.3 360.1 L1138.6 359.9 L1142.9 360.8 L1147.2 361.6 L1151.5 361.8 L1155.8 362.0 L1160.1 363.0 L1164.4 359.3 L1168.7 359.0 L1173.0 361.0 L1177.3 355.0 L1181.6 359.1 L1185.9 363.6 L1190.2 360.3 L1194.5 361.1 L1198.8 358.5 L1203.1 359.9 L1207.4 359.3 L1211.7 359.3 L1216.0 361.1 L1220.3 361.7 L1224.6 361.9 L1228.9 362.4 L1233.2 363.4 L1237.6 361.4 L1241.9 363.0 L1246.2 360.7 L1250.5 359.7 L1254.8 361.3 L1259.1 362.1 L1263.4 358.3 L1267.7 361.9 L1272.0 360.3 L1276.3 362.0 L1280.6 363.2 L1284.9 361.1 L1289.2 363.2 L1293.5 359.2 L1297.8 426.0 L1297.8 426.0 L1293.5 425.7 L1289.2 425.7 L1284.9 425.7 L1280.6 425.7 L1276.3 425.7 L1272.0 425.7 L1267.7 425.7 L1263.4 425.7 L1259.1 425.7 L1254.8 425.7 L1250.5 425.7 L1246.2 425.7 L1241.9 425.7 L1237.6 425.7 L1233.2 425.7 L1228.9 425.7 L1224.6 425.7 L1220.3 425.7 L1216.0 425.7 L1211.7 425.7 L1207.4 425.7 L1203.1 425.7 L1198.8 425.7 L1194.5 425.7 L1190.2 425.7 L1185.9 425.7 L1181.6 425.7 L1177.3 425.7 L1173.0 425.7 L1168.7 425.7 L1164.4 425.7 L1160.1 425.7 L1155.8 425.7 L1151.5 425.7 L1147.2 425.7 L1142.9 425.7 L1138.6 425.7 L1134.3 425.7 L1130.0 425.7 L1125.7 425.7 L1121.4 425.7 L1117.1 425.7 L1112.8 425.7 L1108.4 425.7 L1104.1 425.7 L1099.8 425.7 L1095.5 425.7 L1091.2 425.7 L1086.9 425.7 L1082.6 425.7 L1078.3 425.7 L1074.0 425.7 L1069.7 425.7 L1065.4 425.7 L1061.1 425.7 L1056.8 425.7 L1052.5 425.7 L1048.2 425.7 L1043.9 425.7 L1039.6 425.7 L1035.3 425.7 L1031.0 425.7 L1026.7 425.7 L1022.4 425.7 L1018.1 425.7 L1013.8 425.7 L1009.5 425.7 L1005.2 425.7 L1000.9 425.7 L996.6 425.7 L992.3 425.7 L988.0 425.7 L983.7 425.7 L979.3 425.7 L975.0 425.7 L970.7 425.7 L966.4 425.7 L962.1 425.7 L957.8 425.7 L953.5 425.7 L949.2 425.7 L944.9 425.7 L940.6 425.7 L936.3 425.7 L932.0 425.7 L927.7 425.7 L923.4 425.7 L919.1 425.7 L914.8 425.7 L910.5 425.7 L906.2 425.7 L901.9 425.7 L897.6 425.7 L893.3 425.7 L889.0 425.7 L884.7 425.7 L880.4 425.7 L876.1 425.7 L871.8 425.7 L867.5 425.7 L863.2 425.7 L858.9 425.7 L854.5 425.7 L850.2 425.7 L845.9 425.7 L841.6 425.7 L837.3 425.7 L833.0 425.7 L828.7 425.7 L824.4 425.7 L820.1 425.7 L815.8 425.7 L811.5 425.7 L807.2 425.7 L802.9 425.7 Z" fill="rgba(60,150,255,0.55)"/><path d="M544.7 425.8 L549.0 425.7 L553.3 425.9 L557.6 425.6 L561.9 425.7 L566.2 425.5 L570.5 425.6 L574.8 425.9 L579.1 425.5 L583.4 426.0 L587.7 425.8 L592.0 425.4 L596.3 426.0 L600.6 425.6 L605.0 425.8 L609.3 426.0 L613.6 426.0 L617.9 425.9 L622.2 425.8 L626.5 425.7 L630.8 425.5 L635.1 425.4 L639.4 426.1 L643.7 425.5 L648.0 425.7 L652.3 425.4 L656.6 425.8 L660.9 425.4 L665.2 426.0 L669.5 425.6 L673.8 425.3 L678.1 425.5 L682.4 425.4 L686.7 425.7 L691.0 425.3 L695.3 425.5 L699.6 425.7 L703.9 425.7 L708.2 426.0 L712.5 425.8 L716.8 425.8 L721.1 425.7 L725.4 425.4 L729.7 425.9 L734.1 425.4 L738.4 425.4 L742.7 426.0 L747.0 425.9 L751.3 425.5 L755.6 425.7 L759.9 425.8 L764.2 425.5 L768.5 426.0 L772.8 425.8 L777.1 426.0 L781.4 425.6 L785.7 425.9 L790.0 426.1 L794.3 426.1 L798.6 425.5 L802.9 425.7" fill="none" stroke="#4a90e2" stroke-width="2"/><path d="M1297.8 426.0 L1302.1 425.7 L1306.4 425.4 L1310.7 425.5 L1315.0 425.9 L1319.3 425.8 L1323.6 426.1 L1327.9 425.4 L1332.2 425.9 L1336.5 425.9 L1340.8 425.4 L1345.1 426.0 L1349.4 425.8 L1353.7 426.0 L1358.0 425.6 L1362.3 425.9 L1366.7 425.6 L1371.0 425.9 L1375.3 425.6 L1379.6 425.7 L1383.9 425.6 L1388.2 425.6 L1392.5 425.4 L1396.8 425.4 L1401.1 425.4 L1405.4 426.0 L1409.7 425.7 L1414.0 426.1 L1418.3 425.5 L1422.6 426.1 L1426.9 425.7 L1431.2 425.6 L1435.5 425.8 L1439.8 425.5 L1444.1 425.7 L1448.4 425.8 L1452.7 425.4 L1457.0 426.0 L1461.3 426.1 L1465.6 426.1 L1469.9 425.4 L1474.2 426.0 L1478.5 425.4 L1482.8 425.5 L1487.1 426.1 L1491.5 425.8 L1495.8 425.4 L1500.1 425.3 L1504.4 425.4 L1508.7 425.6 L1513.0 425.8 L1517.3 425.9 L1521.6 425.6 L1525.9 425.4 L1530.2 425.7 L1534.5 425.9 L1538.8 425.9 L1543.1 425.4 L1547.4 426.0 L1551.7 425.6 L1556.0 425.6 L1560.3 425.9 L1564.6 425.5 L1568.9 425.7 L1573.2 426.0" fill="none" stroke="#4a90e2" stroke-width="2"/><rect x="801.2" y="204.7" width="4.3" height="307.7" fill="rgba(248,204,133,0.45)"/><rect x="805.5" y="204.7" width="17.2" height="307.7" fill="rgba(248,136,114,0.45)"/><rect x="822.7" y="204.7" width="8.6" height="307.7" fill="rgba(248,204,133,0.45)"/><rect x="831.3" y="204.7" width="17.2" height="307.7" fill="rgba(248,136,114,0.45)"/><rect x="848.5" y="204.7" width="4.3" height="307.7" fill="rgba(248,204,133,0.45)"/><rect x="852.8" y="204.7" width="21.5" height="307.7" fill="rgba(248,136,114,0.45)"/><rect x="874.4" y="204.7" width="4.3" height="307.7" fill="rgba(248,204,133,0.45)"/><rect x="878.7" y="204.7" width="4.3" height="307.7" fill="rgba(248,136,114,0.45)"/><rect x="883.0" y="204.7" width="4.3" height="307.7" fill="rgba(248,204,133,0.45)"/><rect x="887.3" y="204.7" width="4.3" height="307.7" fill="rgba(248,136,114,0.45)"/><rect x="891.6" y="204.7" width="12.9" height="307.7" fill="rgba(248,204,133,0.45)"/><rect x="904.5" y="204.7" width="4.3" height="307.7" fill="rgba(248,136,114,0.45)"/><rect x="908.8" y="204.7" width="4.3" height="307.7" fill="rgba(248,204,133,0.45)"/><rect x="913.1" y="204.7" width="4.3" height="307.7" fill="rgba(248,136,114,0.45)"/><rect x="917.4" y="204.7" width="4.3" height="307.7" fill="rgba(248,204,133,0.45)"/><rect x="921.7" y="204.7" width="12.9" height="307.7" fill="rgba(248,136,114,0.45)"/><rect x="934.6" y="204.7" width="4.3" height="307.7" fill="rgba(248,204,133,0.45)"/><rect x="938.9" y="204.7" width="8.6" height="307.7" fill="rgba(248,136,114,0.45)"/><rect x="947.5" y="204.7" width="4.3" height="307.7" fill="rgba(248,204,133,0.45)"/><rect x="951.8" y="204.7" width="21.5" height="307.7" fill="rgba(248,136,114,0.45)"/><rect x="973.3" y="204.7" width="12.9" height="307.7" fill="rgba(248,204,133,0.45)"/><rect x="986.2" y="204.7" width="4.3" height="307.7" fill="rgba(248,136,114,0.45)"/><rect x="990.5" y="204.7" width="12.9" height="307.7" fill="rgba(248,204,133,0.45)"/><rect x="1003.5" y="204.7" width="4.3" height="307.7" fill="rgba(248,136,114,0.45)"/><rect x="1007.8" y="204.7" width="4.3" height="307.7" fill="rgba(248,204,133,0.45)"/><rect x="1012.1" y="204.7" width="21.5" height="307.7" fill="rgba(248,136,114,0.45)"/><rect x="1033.6" y="204.7" width="4.3" height="307.7" fill="rgba(248,204,133,0.45)"/><rect x="1037.9" y="204.7" width="4.3" height="307.7" fill="rgba(248,136,114,0.45)"/><rect x="1042.2" y="204.7" width="4.3" height="307.7" fill="rgba(248,204,133,0.45)"/><rect x="1046.5" y="204.7" width="8.6" height="307.7" fill="rgba(248,136,114,0.45)"/><rect x="1055.1" y="204.7" width="4.3" height="307.7" fill="rgba(248,204,133,0.45)"/><rect x="1059.4" y="204.7" width="8.6" height="307.7" fill="rgba(248,136,114,0.45)"/><rect x="1068.0" y="204.7" width="12.9" height="307.7" fill="rgba(248,204,133,0.45)"/><rect x="1080.9" y="204.7" width="4.3" height="307.7" fill="rgba(248,136,114,0.45)"/><rect x="1089.5" y="204.7" width="8.6" height="307.7" fill="rgba(248,136,114,0.45)"/><rect x="1098.1" y="204.7" width="4.3" height="307.7" fill="rgba(248,204,133,0.45)"/><rect x="1102.4" y="204.7" width="4.3" height="307.7" fill="rgba(248,136,114,0.45)"/><rect x="1106.7" y="204.7" width="8.6" height="307.7" fill="rgba(248,204,133,0.45)"/><rect x="1115.3" y="204.7" width="17.2" height="307.7" fill="rgba(248,136,114,0.45)"/><rect x="1132.6" y="204.7" width="8.6" height="307.7" fill="rgba(248,204,133,0.45)"/><rect x="1141.2" y="204.7" width="17.2" height="307.7" fill="rgba(248,136,114,0.45)"/><rect x="1158.4" y="204.7" width="4.3" height="307.7" fill="rgba(248,204,133,0.45)"/><rect x="1162.7" y="204.7" width="4.3" height="307.7" fill="rgba(248,136,114,0.45)"/><rect x="1167.0" y="204.7" width="8.6" height="307.7" fill="rgba(248,204,133,0.45)"/><rect x="1175.6" y="204.7" width="25.8" height="307.7" fill="rgba(248,136,114,0.45)"/><rect x="1201.4" y="204.7" width="8.6" height="307.7" fill="rgba(248,204,133,0.45)"/><rect x="1210.0" y="204.7" width="8.6" height="307.7" fill="rgba(248,136,114,0.45)"/><rect x="1218.6" y="204.7" width="4.3" height="307.7" fill="rgba(248,204,133,0.45)"/><rect x="1222.9" y="204.7" width="8.6" height="307.7" fill="rgba(248,136,114,0.45)"/><rect x="1231.5" y="204.7" width="4.3" height="307.7" fill="rgba(248,204,133,0.45)"/><rect x="1235.8" y="204.7" width="8.6" height="307.7" fill="rgba(248,136,114,0.45)"/><rect x="1244.5" y="204.7" width="4.3" height="307.7" fill="rgba(248,204,133,0.45)"/><rect x="1248.8" y="204.7" width="4.3" height="307.7" fill="rgba(248,136,114,0.45)"/><rect x="1253.1" y="204.7" width="8.6" height="307.7" fill="rgba(248,204,133,0.45)"/><rect x="1261.7" y="204.7" width="8.6" height="307.7" fill="rgba(248,136,114,0.45)"/><rect x="1270.3" y="204.7" width="17.2" height="307.7" fill="rgba(248,204,133,0.45)"/><rect x="1287.5" y="204.7" width="8.6" height="307.7" fill="rgba(248,136,114,0.45)"/><path d="M803.0 425.8 L807.2 399.5 L813.0 403.6 L820.9 411.5 L824.5 407.6 L828.8 416.5 L837.4 401.4 L841.7 411.5 L846.0 405.0 L854.7 415.0 L859.7 402.8 L864.0 412.9 L868.3 408.6 L872.7 407.9 L877.0 412.9 L885.6 400.0 L889.9 408.6 L893.5 400.0 L902.1 400.7 L907.1 405.7 L913.6 407.9 L921.5 397.8 L924.4 397.8 L928.0 408.6 L933.7 407.9 L940.2 409.3 L945.2 401.4 L951.0 405.7 L956.7 407.9 L962.1 418.6 L966.8 406.4 L975.4 400.0 L984.0 406.4 L988.4 400.0 L993.4 410.7 L1001.3 401.4 L1013.5 409.3 L1016.4 405.7 L1030.0 404.0 L1045.0 409.0 L1060.0 401.0 L1075.0 407.0 L1090.0 399.0 L1105.0 410.0 L1120.0 403.0 L1135.0 407.0 L1150.0 400.0 L1165.0 408.0 L1177.5 411.5 L1181.3 415.3 L1186.3 391.5 L1190.8 405.0 L1196.6 398.0 L1202.3 415.3 L1208.0 403.8 L1215.6 409.5 L1221.4 405.0 L1229.0 405.7 L1234.7 402.0 L1240.5 413.4 L1247.3 394.3 L1251.9 409.5 L1259.5 405.7 L1267.2 402.0 L1272.9 410.3 L1280.5 411.5 L1286.3 405.0 L1293.9 413.4 L1297.7 424.8" fill="none" stroke="rgba(70,95,195,0.5)" stroke-width="1.7" stroke-linejoin="round"/><rect x="541" y="512" width="1033" height="1" fill="rgba(0,0,0,0.21)"/><rect x="541" y="448" width="1033" height="1" fill="rgba(0,0,0,0.21)"/><rect x="541" y="384" width="1033" height="1" fill="rgba(0,0,0,0.21)"/><rect x="541" y="319" width="1033" height="1" fill="rgba(0,0,0,0.21)"/><rect x="541" y="255" width="1033" height="1" fill="rgba(0,0,0,0.21)"/><rect x="961.3" y="204.7" width="2.4" height="307.7" fill="#5a5e6e"/><circle cx="962.5" cy="418.6" r="4.6" fill="#fff" stroke="#4f5464" stroke-width="2"/><g transform="translate(1512 227)" fill="none" stroke="#4a90e2" stroke-width="1.7" stroke-linecap="butt"><path d="M-12.2 -5.5 V-12.2 H-5.5"/><path d="M-12 -12 L-2.5 -2.5"/><path d="M12.2 -5.5 V-12.2 H5.5"/><path d="M12 -12 L2.5 -2.5"/><path d="M-12.2 5.5 V12.2 H-5.5"/><path d="M-12 12 L-2.5 2.5"/><path d="M12.2 5.5 V12.2 H5.5"/><path d="M12 12 L2.5 2.5"/></g><g fill="#4a90e2"><circle cx="1555.2" cy="219.7" r="2.7"/><circle cx="1555.2" cy="227.7" r="2.7"/><circle cx="1555.2" cy="235.7" r="2.7"/></g><rect x="805.5" y="634.6" width="4.3" height="306.9" fill="#fdebd3"/><rect x="809.8" y="634.6" width="4.3" height="306.9" fill="#fdebd3"/><rect x="814.1" y="634.6" width="4.3" height="306.9" fill="#fdebd3"/><rect x="818.4" y="634.6" width="4.3" height="306.9" fill="#fdebd3"/><rect x="831.3" y="634.6" width="4.3" height="306.9" fill="#fdebd3"/><rect x="835.6" y="634.6" width="4.3" height="306.9" fill="#fdebd3"/><rect x="839.9" y="634.6" width="4.3" height="306.9" fill="#fdebd3"/><rect x="844.2" y="634.6" width="4.3" height="306.9" fill="#fdebd3"/><rect x="861.4" y="634.6" width="4.3" height="306.9" fill="#fdebd3"/><rect x="865.8" y="634.6" width="4.3" height="306.9" fill="#fdebd3"/><rect x="870.1" y="634.6" width="4.3" height="306.9" fill="#fdebd3"/><rect x="878.7" y="634.6" width="4.3" height="306.9" fill="#fdebd3"/><rect x="887.3" y="634.6" width="4.3" height="306.9" fill="#fdebd3"/><rect x="904.5" y="634.6" width="4.3" height="306.9" fill="#fdebd3"/><rect x="913.1" y="634.6" width="4.3" height="306.9" fill="#fdebd3"/><rect x="938.9" y="634.6" width="4.3" height="306.9" fill="#fdebd3"/><rect x="969.0" y="634.6" width="4.3" height="306.9" fill="#fdebd3"/><rect x="986.2" y="634.6" width="4.3" height="306.9" fill="#fdebd3"/><rect x="1003.5" y="634.6" width="4.3" height="306.9" fill="#fdebd3"/><rect x="1012.1" y="634.6" width="4.3" height="306.9" fill="#fdebd3"/><rect x="1025.0" y="634.6" width="4.3" height="306.9" fill="#fdebd3"/><rect x="1046.5" y="634.6" width="4.3" height="306.9" fill="#fdebd3"/><rect x="1059.4" y="634.6" width="4.3" height="306.9" fill="#fdebd3"/><rect x="1063.7" y="634.6" width="4.3" height="306.9" fill="#fdebd3"/><rect x="1080.9" y="634.6" width="4.3" height="306.9" fill="#fdebd3"/><rect x="1115.3" y="634.6" width="4.3" height="306.9" fill="#fdebd3"/><rect x="1119.7" y="634.6" width="4.3" height="306.9" fill="#fdebd3"/><rect x="1124.0" y="634.6" width="4.3" height="306.9" fill="#fdebd3"/><rect x="1128.3" y="634.6" width="4.3" height="306.9" fill="#fdebd3"/><rect x="1145.5" y="634.6" width="4.3" height="306.9" fill="#fdebd3"/><rect x="1179.9" y="634.6" width="4.3" height="306.9" fill="#fdebd3"/><rect x="1188.5" y="634.6" width="4.3" height="306.9" fill="#fdebd3"/><rect x="1214.3" y="634.6" width="4.3" height="306.9" fill="#fdebd3"/><rect x="1227.2" y="634.6" width="4.3" height="306.9" fill="#fdebd3"/><rect x="1248.8" y="634.6" width="4.3" height="306.9" fill="#fdebd3"/><rect x="1266.0" y="634.6" width="4.3" height="306.9" fill="#fdebd3"/><rect x="1287.5" y="634.6" width="4.3" height="306.9" fill="#fdebd3"/><rect x="541" y="645" width="1033" height="1" fill="rgba(0,0,0,0.2)"/><rect x="541" y="704" width="1033" height="1" fill="rgba(0,0,0,0.2)"/><rect x="541" y="764" width="1033" height="1" fill="rgba(0,0,0,0.2)"/><rect x="541" y="823" width="1033" height="1" fill="rgba(0,0,0,0.2)"/><rect x="541" y="882" width="1033" height="1" fill="rgba(0,0,0,0.2)"/><rect x="541" y="941" width="1033" height="1" fill="rgba(0,0,0,0.2)"/><text transform="translate(531 675) rotate(-90)" text-anchor="middle" font-family="Liberation Sans" font-size="13" fill="#333">Best</text><text transform="translate(531 734.6) rotate(-90)" text-anchor="middle" font-family="Liberation Sans" font-size="13" fill="#333">High</text><text transform="translate(531 794.5) rotate(-90)" text-anchor="middle" font-family="Liberation Sans" font-size="13" fill="#333">Med.</text><text transform="translate(531 851.5) rotate(-90)" text-anchor="middle" font-family="Liberation Sans" font-size="13" fill="#333">Low</text><text transform="translate(531 912.8) rotate(-90)" text-anchor="middle" font-family="Liberation Sans" font-size="13" fill="#333">Poor</text><rect x="647.5" y="941" width="1" height="7" fill="#cfcfcf"/><text x="648.0" y="961.5" text-anchor="middle" font-family="Liberation Sans" font-size="12.5" fill="#333" stroke="#333" stroke-width="0.2">15:00</text><rect x="776.6" y="941" width="1" height="7" fill="#cfcfcf"/><text x="777.1" y="961.5" text-anchor="middle" font-family="Liberation Sans" font-size="12.5" fill="#333" stroke="#333" stroke-width="0.2">16:00</text><rect x="905.7" y="941" width="1" height="7" fill="#cfcfcf"/><text x="906.2" y="961.5" text-anchor="middle" font-family="Liberation Sans" font-size="12.5" fill="#333" stroke="#333" stroke-width="0.2">17:00</text><rect x="1034.8" y="941" width="1" height="7" fill="#cfcfcf"/><text x="1035.3" y="961.5" text-anchor="middle" font-family="Liberation Sans" font-size="12.5" fill="#333" stroke="#333" stroke-width="0.2">18:00</text><rect x="1163.9" y="941" width="1" height="7" fill="#cfcfcf"/><text x="1164.4" y="961.5" text-anchor="middle" font-family="Liberation Sans" font-size="12.5" fill="#333" stroke="#333" stroke-width="0.2">19:00</text><rect x="1293.0" y="941" width="1" height="7" fill="#cfcfcf"/><text x="1293.5" y="961.5" text-anchor="middle" font-family="Liberation Sans" font-size="12.5" fill="#333" stroke="#333" stroke-width="0.2">20:00</text><rect x="1422.1" y="941" width="1" height="7" fill="#cfcfcf"/><text x="1422.6" y="961.5" text-anchor="middle" font-family="Liberation Sans" font-size="12.5" fill="#333" stroke="#333" stroke-width="0.2">21:00</text><rect x="1551.2" y="941" width="1" height="7" fill="#cfcfcf"/><text x="1551.7" y="961.5" text-anchor="middle" font-family="Liberation Sans" font-size="12.5" fill="#333" stroke="#333" stroke-width="0.2">22:00</text><path d="M544.7 659.8 L549.0 659.8 L553.3 659.8 L557.6 659.8 L561.9 659.8 L566.2 659.8 L570.5 659.8 L574.8 659.8 L579.1 659.8 L583.4 659.8 L587.7 659.8 L592.0 659.8 L596.3 659.8 L600.6 667.8 L605.0 659.8 L609.3 659.8 L613.6 659.8 L617.9 659.8 L622.2 659.8 L626.5 659.8 L630.8 659.8 L635.1 659.8 L639.4 659.8 L643.7 659.8 L648.0 659.8 L652.3 659.8 L656.6 659.8 L660.9 659.8 L665.2 659.8 L669.5 659.8 L673.8 659.8 L678.1 659.8 L682.4 659.8 L686.7 659.8 L691.0 659.8 L695.3 659.8 L699.6 659.8 L703.9 659.8 L708.2 659.8 L712.5 659.8 L716.8 659.8 L721.1 659.8 L725.4 659.8 L729.7 659.8 L734.1 659.8 L738.4 659.8 L742.7 659.8 L747.0 659.8 L751.3 659.8 L755.6 659.8 L759.9 659.8 L764.2 659.8 L768.5 696.4 L772.8 659.8 L777.1 659.8 L781.4 659.8 L785.7 659.8 L790.0 659.8 L794.3 659.8 L798.6 659.8 L802.9 705.0 L807.2 764.0 L811.5 782.0 L815.8 800.0 L820.1 769.5 L824.4 715.0 L828.7 725.8 L833.0 780.0 L837.3 789.6 L841.6 766.0 L845.9 767.4 L850.2 738.0 L854.5 750.6 L858.9 752.4 L863.2 776.5 L867.5 796.6 L871.8 786.1 L876.1 726.3 L880.4 764.6 L884.7 738.0 L889.0 779.1 L893.3 726.6 L897.6 737.1 L901.9 726.3 L906.2 769.2 L910.5 740.1 L914.8 765.7 L919.1 726.6 L923.4 754.6 L927.7 752.9 L932.0 752.4 L936.3 740.1 L940.6 792.8 L944.9 752.0 L949.2 736.2 L953.5 750.2 L957.8 750.6 L962.1 779.1 L966.4 755.5 L970.7 792.2 L975.0 726.6 L979.3 739.4 L983.7 741.5 L988.0 803.6 L992.3 739.4 L996.6 737.1 L1000.9 737.1 L1005.2 764.6 L1009.5 726.6 L1013.8 789.6 L1018.1 735.0 L1022.4 742.0 L1026.7 772.0 L1031.0 728.0 L1035.3 748.0 L1039.6 720.0 L1043.9 745.0 L1048.2 782.0 L1052.5 733.0 L1056.8 748.0 L1061.1 776.0 L1065.4 770.0 L1069.7 724.0 L1074.0 740.0 L1078.3 735.0 L1082.6 803.0 L1086.9 728.0 L1091.2 745.0 L1095.5 722.0 L1099.8 750.0 L1104.1 735.0 L1108.4 742.0 L1112.8 730.0 L1117.1 775.0 L1121.4 790.0 L1125.7 772.0 L1130.0 785.0 L1134.3 738.0 L1138.6 726.0 L1142.9 744.0 L1147.2 802.0 L1151.5 735.0 L1155.8 722.0 L1160.1 748.0 L1164.4 740.0 L1168.7 730.0 L1173.0 752.0 L1177.3 728.0 L1181.6 776.0 L1185.9 753.7 L1190.2 778.5 L1194.5 764.0 L1198.8 750.0 L1203.1 740.3 L1207.4 714.4 L1211.7 745.0 L1216.0 778.5 L1220.3 726.2 L1224.6 745.0 L1228.9 766.3 L1233.2 737.6 L1237.6 750.6 L1241.9 751.8 L1246.2 714.4 L1250.5 766.3 L1254.8 737.6 L1259.1 740.3 L1263.4 752.0 L1267.7 767.0 L1272.0 712.8 L1276.3 738.4 L1280.6 739.0 L1284.9 739.5 L1289.2 767.0 L1293.5 753.7 L1297.8 659.8 L1302.1 659.8 L1306.4 659.8 L1310.7 659.8 L1315.0 659.8 L1319.3 659.8 L1323.6 659.8 L1327.9 659.8 L1332.2 659.8 L1336.5 659.8 L1340.8 659.8 L1345.1 659.8 L1349.4 659.8 L1353.7 659.8 L1358.0 659.8 L1362.3 659.8 L1366.7 659.8 L1371.0 659.8 L1375.3 659.8 L1379.6 659.8 L1383.9 659.8 L1388.2 659.8 L1392.5 659.8 L1396.8 659.8 L1401.1 659.8 L1405.4 659.8 L1409.7 659.8 L1414.0 659.8 L1418.3 659.8 L1422.6 659.8 L1426.9 659.8 L1431.2 659.8 L1435.5 659.8 L1439.8 659.8 L1444.1 659.8 L1448.4 659.8 L1452.7 659.8 L1457.0 659.8 L1461.3 659.8 L1465.6 659.8 L1469.9 659.8 L1474.2 659.8 L1478.5 659.8 L1482.8 659.8 L1487.1 659.8 L1491.5 659.8 L1495.8 659.8 L1500.1 659.8 L1504.4 659.8 L1508.7 659.8 L1513.0 659.8 L1517.3 659.8 L1521.6 659.8 L1525.9 659.8 L1530.2 659.8 L1534.5 659.8 L1538.8 659.8 L1543.1 659.8 L1547.4 659.8 L1551.7 659.8 L1556.0 659.8 L1560.3 659.8 L1564.6 659.8 L1568.9 659.8 L1573.2 659.8" fill="none" stroke="#4a90e2" stroke-width="2.2" stroke-linejoin="round"/><rect x="961.3" y="634.6" width="2.4" height="307" fill="#5a5e6e"/><circle cx="962.5" cy="779.2" r="4.6" fill="#fff" stroke="#4f5464" stroke-width="2"/><g transform="translate(1512 657)" fill="none" stroke="#4a90e2" stroke-width="1.7" stroke-linecap="butt"><path d="M-12.2 -5.5 V-12.2 H-5.5"/><path d="M-12 -12 L-2.5 -2.5"/><path d="M12.2 -5.5 V-12.2 H5.5"/><path d="M12 -12 L2.5 -2.5"/><path d="M-12.2 5.5 V12.2 H-5.5"/><path d="M-12 12 L-2.5 2.5"/><path d="M12.2 5.5 V12.2 H5.5"/><path d="M12 12 L2.5 2.5"/></g><g fill="#4a90e2"><circle cx="1555.2" cy="649.5" r="2.7"/><circle cx="1555.2" cy="657.5" r="2.7"/><circle cx="1555.2" cy="665.5" r="2.7"/></g></svg><div class="tip" style="left:1017px;top:209px;width:160px;height:273px"></div><svg class="abs" style="left:1028px;top:233px" width="13" height="13" viewBox="0 0 13 13" fill="none" stroke="#222" stroke-width="1.3"><circle cx="6.5" cy="6.5" r="5.2"/><path d="M6.5 3.5 V6.8 H4"/></svg><div class="t" style="left:1045.5px;top:226.5px;font-size:12.7px;color:#4a4a4a"><span style="-webkit-text-stroke:0.25px #333;color:#333">Nov 01 2022,</span></div><div class="t" style="left:1045.5px;top:242.0px;font-size:12.7px;color:#4a4a4a"><span style="-webkit-text-stroke:0.25px #333;color:#333">17:26:00</span></div><div class="t" style="left:1028.5px;top:265.9px;font-size:12.7px;color:#4a4a4a"><span style="-webkit-text-stroke:0.25px #333;color:#333">Period: 2 minutes</span></div><div class="t" style="left:1028.5px;top:289.9px;font-size:12.7px;color:#4a4a4a"><span style="-webkit-text-stroke:0.25px #333;color:#333">Latency Avg / Max (ms)</span></div><div class="t" style="left:1028.5px;top:309.9px;font-size:12.7px;color:#4a4a4a"><b>Med:</b> <span style="color:#555">14.26 / 14.61</span></div><div class="t" style="left:1028.5px;top:328.9px;font-size:12.7px;color:#4a4a4a"><b>P95:</b> <span style="color:#555">25.00 / 25.31</span></div><div class="t" style="left:1028.5px;top:347.4px;font-size:12.7px;color:#4a4a4a"><b>P99:</b> <span style="color:#555">25.50 / 25.59</span></div><div class="t" style="left:1028.5px;top:371.4px;font-size:12.7px;color:#4a4a4a"><span style="-webkit-text-stroke:0.25px #333;color:#333">Jitter Avg (ms)</span></div><div class="t" style="left:1028.5px;top:390.9px;font-size:12.7px;color:#4a4a4a"><b>Med:</b> <span style="color:#555">2.92</span></div><div class="t" style="left:1028.5px;top:409.9px;font-size:12.7px;color:#4a4a4a"><b>P95:</b> <span style="color:#555">11.50</span></div><div class="t" style="left:1028.5px;top:433.9px;font-size:12.7px;color:#4a4a4a"><span style="-webkit-text-stroke:0.25px #333;color:#333">Packet Loss</span></div><div class="t" style="left:1028.5px;top:452.9px;font-size:12.7px;color:#4a4a4a"><span style="color:#555">6.03%</span></div><div class="tip" style="left:1017px;top:639px;width:169px;height:152px"></div><svg class="abs" style="left:1028px;top:656px" width="13" height="13" viewBox="0 0 13 13" fill="none" stroke="#222" stroke-width="1.3"><circle cx="6.5" cy="6.5" r="5.2"/><path d="M6.5 3.5 V6.8 H4"/></svg><div class="t" style="left:1047.5px;top:656.9px;font-size:12.7px;color:#4a4a4a"><span style="-webkit-text-stroke:0.25px #333;color:#333">Nov 01 2022, 17:26:00</span></div><div class="t" style="left:1028.5px;top:687.4px;font-size:12.7px;color:#4a4a4a"><b>Period:</b> <span style="color:#555">2 minutes</span></div><div class="t" style="left:1028.5px;top:710.9px;font-size:12.7px;color:#4a4a4a"><b>MOS:</b></div><div class="t" style="left:1040px;top:733.9px;font-size:12.7px;color:#4a4a4a"><b>Avg:</b> <span style="color:#555">3.92</span></div><div class="t" style="left:1040px;top:757.9px;font-size:12.7px;color:#4a4a4a"><b>Min:</b> <span style="color:#555">3.92</span></div></body></html>
